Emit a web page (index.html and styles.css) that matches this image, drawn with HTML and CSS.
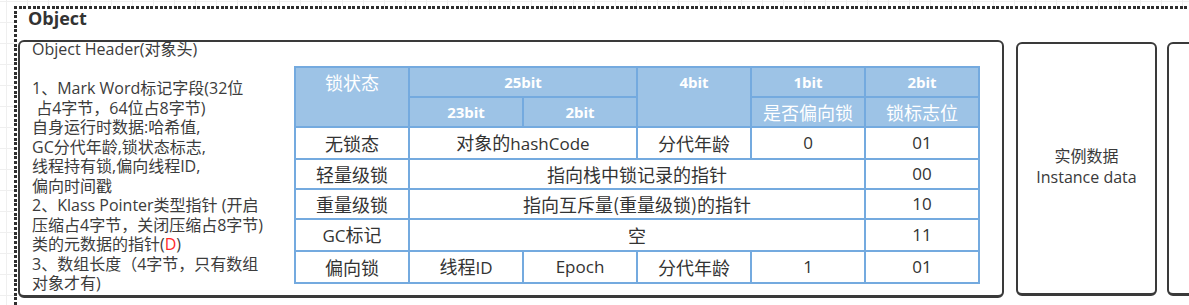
FILE: index.html
```html
<!DOCTYPE html>
<html lang="zh-CN">
<head>
<meta charset="utf-8">
<title>Object</title>
<link rel="stylesheet" href="styles.css">
</head>
<body>
<div class="frame">
  <div class="title">Object</div>
  <div class="row">
    <div class="box header-box">
      <div class="desc">Object Header(对象头)<br><br>1、Mark Word标记字段(32位<br>&nbsp;占4字节，64位占8字节)<br>自身运行时数据:哈希值,<br>GC分代年龄,锁状态标志,<br>线程持有锁,偏向线程ID,<br>偏向时间戳<br>2、Klass Pointer类型指针 (开启<br>压缩占4字节，关闭压缩占8字节)<br>类的元数据的指针(<span class="red">D</span>)<br>3、数组长度（4字节，只有数组<br>对象才有)</div>
      <table class="lock">
        <colgroup><col><col><col><col><col><col></colgroup>
        <tr class="head">
          <td rowspan="2" class="top cjk">锁状态</td>
          <td colspan="2" class="bit">25bit</td>
          <td rowspan="2" class="top bit">4bit</td>
          <td class="bit">1bit</td>
          <td class="bit">2bit</td>
        </tr>
        <tr class="head">
          <td class="bit">23bit</td>
          <td class="bit">2bit</td>
          <td class="cjk">是否偏向锁</td>
          <td class="cjk">锁标志位</td>
        </tr>
        <tr>
          <td>无锁态</td>
          <td colspan="2">对象的<span class="lat">hashCode</span></td>
          <td>分代年龄</td>
          <td class="num">0</td>
          <td class="num">01</td>
        </tr>
        <tr>
          <td>轻量级锁</td>
          <td colspan="4">指向栈中锁记录的指针</td>
          <td class="num">00</td>
        </tr>
        <tr>
          <td>重量级锁</td>
          <td colspan="4">指向互斥量(重量级锁)的指针</td>
          <td class="num">10</td>
        </tr>
        <tr>
          <td><span class="lat">GC</span>标记</td>
          <td colspan="4">空</td>
          <td class="num">11</td>
        </tr>
        <tr>
          <td>偏向锁</td>
          <td>线程<span class="lat">ID</span></td>
          <td class="num">Epoch</td>
          <td>分代年龄</td>
          <td class="num">1</td>
          <td class="num">01</td>
        </tr>
      </table>
    </div>
    <div class="box inst"><div class="inst-text">实例数据<br>Instance data</div></div>
    <div class="box pad"></div>
  </div>
</div>
</body>
</html>
```

FILE: styles.css
```css
html, body {
  margin: 0;
  padding: 0;
}
body {
  width: 1189px;
  height: 305px;
  overflow: hidden;
  background-color: #ffffff;
  background-image:
    linear-gradient(#efefef 1px, transparent 1px),
    linear-gradient(90deg, #efefef 1px, transparent 1px);
  background-size: 21px 21px;
  background-position: 0 1px, 6px 0;
  font-family: "Open Sans", "Noto Sans CJK SC", sans-serif;
  color: #3a3a3a;
}
.frame {
  box-sizing: border-box;
  margin: 6px 0 0 14px;
  width: 1175px;
  height: 299px;
  overflow: hidden;
  padding: 3px 0 0 3px;
  background:
    repeating-linear-gradient(90deg, #2e2e2e 0 3px, transparent 3px 4.7px) 0 0 / 100% 3px no-repeat,
    repeating-linear-gradient(180deg, #2e2e2e 0 3px, transparent 3px 4.7px) 0 0 / 3px 100% no-repeat,
    #ffffff;
}
.title {
  padding-left: 11px;
  font-size: 18px;
  font-weight: 700;
  line-height: 18px;
  height: 31px;
  color: #333333;
}
.row {
  display: flex;
  align-items: flex-start;
}
.box {
  flex: none;
  box-sizing: border-box;
  border: 2px solid #3a3a3a;
  border-bottom-width: 3px;
  border-radius: 6px;
  background: #ffffff;
}
.header-box {
  margin-left: 1px;
  width: 986px;
  height: 258px;
  display: flex;
  align-items: flex-start;
  padding-left: 12px;
}
.desc {
  width: 262px;
  flex: none;
  margin-top: -2px;
  font-size: 16px;
  line-height: 19.5px;
  color: #3c3c3c;
  white-space: nowrap;
}
.red {
  color: #ff2a2a;
}
.lock {
  margin-top: 24px;
  border-collapse: collapse;
  table-layout: fixed;
  width: 684px;
  font-family: "Noto Sans CJK SC", sans-serif;
  font-size: 18px;
  color: #333333;
}
.lock col {
  width: 114px;
}
.lock td {
  border: 2px solid #74aadf;
  height: 28px;
  padding: 0;
  text-align: center;
  vertical-align: middle;
  line-height: 28px;
  white-space: nowrap;
  overflow: hidden;
}
.lock .head td {
  background: #9dc3e6;
  color: #ffffff;
}
.lock .head td.top {
  vertical-align: top;
}
.lock .bit {
  font-family: "Open Sans", sans-serif;
  font-weight: 700;
  font-size: 15px;
}
.lock .cjk {
  font-weight: 400;
}
.lock .num,
.lock .lat {
  font-family: "Open Sans", sans-serif;
  font-size: 17px;
}
.inst {
  margin-left: 12px;
  margin-top: 2px;
  width: 141px;
  height: 254px;
  display: flex;
  align-items: center;
  justify-content: center;
  text-align: center;
}
.inst-text {
  font-size: 16px;
  line-height: 21px;
  color: #3a3a3a;
  margin-top: -3px;
}
.pad {
  margin-left: 10px;
  margin-top: 2px;
  width: 120px;
  height: 254px;
}
```
